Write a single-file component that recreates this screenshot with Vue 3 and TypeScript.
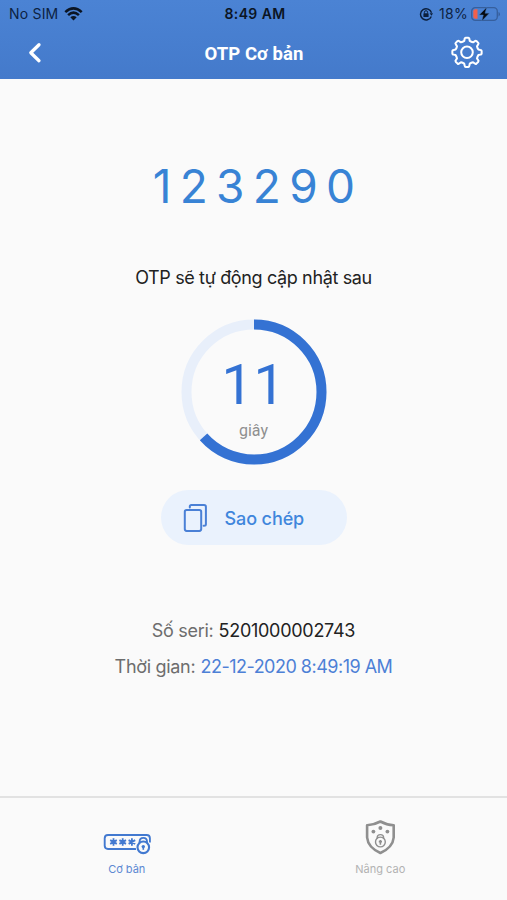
<script setup lang="ts">
import { computed, ref } from 'vue'

const otp = ref('123290')
const remaining = ref(11)
const period = 30
const radius = 67.5
const circumference = 2 * Math.PI * radius
const dash = computed(
  () => `${(circumference * (period - remaining.value)) / period} ${circumference}`,
)

// Outline of an eight-toothed cog centred on the origin.
function cogPath(teeth: number, outer: number, inner: number): string {
  const step = (Math.PI * 2) / teeth
  const at = (r: number, a: number) =>
    `${(r * Math.sin(a)).toFixed(2)} ${(-r * Math.cos(a)).toFixed(2)}`
  let d = ''
  for (let i = 0; i < teeth; i++) {
    const a = i * step
    d += `${i === 0 ? 'M' : 'L'}${at(inner, a - 0.24)}`
    d += `L${at(outer - 1, a - 0.17)}Q${at(outer, a - 0.16)} ${at(outer, a - 0.09)}`
    d += `L${at(outer, a + 0.09)}Q${at(outer, a + 0.16)} ${at(outer - 1, a + 0.17)}`
    d += `L${at(inner, a + 0.24)}Q${at(inner - 0.5, a + step / 2)} ${at(inner, a + step - 0.24)}`
  }
  return d + 'Z'
}
const cog = cogPath(8, 14.7, 11.7)
</script>

<template>
  <div class="screen">
    <header class="top">
      <div class="status">
        <div class="carrier">
          <span class="nosim">No SIM</span>
          <svg width="19" height="14" viewBox="0 0 19 14" fill="none" stroke="#0b1524" stroke-width="2.6">
            <path d="M1.3 5.1Q9.5 -2.3 17.7 5.1" />
            <path d="M4.1 8.1Q9.5 3.3 14.9 8.1" />
            <path d="M6.3 10.2Q9.5 7.6 12.7 10.2L9.5 13.6Z" fill="#0b1524" stroke="none" />
          </svg>
        </div>
        <span class="clock">8:49 AM</span>
        <div class="power">
          <svg class="lock" width="14" height="14" viewBox="0 0 14 14" fill="none" stroke="#0b1f3c">
            <path d="M12.3 9.4A5.6 5.6 0 1 1 12.5 5.8" stroke-width="1.4" />
            <path d="M10.6 6.2H14L12.5 8.8Z" fill="#0b1f3c" stroke="none" />
            <path d="M5.4 6.5V5.3A1.6 1.6 0 0 1 8.6 5.3V6.5" stroke-width="1" />
            <rect x="4.4" y="6.3" width="5.2" height="3.8" rx=".6" fill="#0b1f3c" stroke="none" />
          </svg>
          <span class="percent">18%</span>
          <svg class="battery" width="30" height="16" viewBox="0 0 30 16">
            <rect x=".7" y="1.7" width="25.6" height="12.6" rx="3.6" fill="none" stroke="#365f9d" stroke-width="1.3" />
            <path d="M27.5 6V10.4Q29 9.8 29 8.2T27.5 6Z" fill="#365f9d" />
            <path d="M4.4 3.3H6.5V12.7H4.4Q2.3 12.7 2.3 10.7V5.3Q2.3 3.3 4.4 3.3Z" fill="#f2604b" />
            <path d="M15.7 1.2L8.2 9H12.3L10.8 15L18.3 7.2H14.1Z" fill="#050a12" stroke="#4779bd" stroke-width=".5" />
          </svg>
        </div>
      </div>
      <nav class="bar">
        <svg class="back" width="14" height="22" viewBox="0 0 14 22" fill="none" stroke="#fff" stroke-width="3.3">
          <path d="M11 2.7L2.8 10.7L11 18.7" stroke-linecap="round" stroke-linejoin="round" />
        </svg>
        <h1>OTP Cơ bản</h1>
        <svg class="gear" width="34" height="34" viewBox="-17 -16.3 34 34" fill="none" stroke="#fff" stroke-width="2" stroke-linejoin="round">
          <path :d="cog" />
          <circle r="5.8" />
        </svg>
      </nav>
    </header>

    <main>
      <div class="code">{{ otp }}</div>
      <p class="hint">OTP sẽ tự động cập nhật sau</p>
      <div class="timer">
        <svg class="ring" width="146" height="146" viewBox="-73 -73 146 146" fill="none" stroke-width="10">
          <circle :r="radius" stroke="#e8effa" />
          <circle :r="radius" stroke="#3472d3" :stroke-dasharray="dash" transform="rotate(-90)" />
        </svg>
        <div class="reading">
          <span class="seconds">{{ remaining }}</span>
          <span class="unit">giây</span>
        </div>
      </div>
      <button class="copy" type="button">
        <svg width="24" height="28" viewBox="0 0 24 28" fill="none" stroke="#4a80d6" stroke-width="2" stroke-linejoin="round">
          <rect x="1.8" y="5.9" width="16.4" height="21" rx="1.8" />
          <path d="M6.8 3.6V2.6Q6.8 1.1 8.3 1.1H21Q22.9 1.1 22.9 2.8V20.2Q22.9 21.7 21 21.7H20.6" stroke-linecap="round" />
        </svg>
        <span>Sao chép</span>
      </button>
      <div class="info serial"><span class="key">Số seri:</span> <span class="number">5201000002743</span></div>
      <div class="info time"><span class="key">Thời gian:</span> <span class="date">22-12-2020 8:49:19 AM</span></div>
    </main>

    <footer class="tabs">
      <div class="tab active">
        <svg width="48" height="36" viewBox="0 0 48 36" fill="none" stroke="#4279d0" stroke-width="1.9">
          <path d="M33 30H5Q1.7 30 1.7 26.7V19.3Q1.7 16 5 16H43.6Q46.9 16 46.9 19.3V23.5" />
          <path d="M10.5 19.2V26.8M7.2 21.1L13.8 24.9M13.8 21.1L7.2 24.9M19.7 19.2V26.8M16.4 21.1L23 24.9M23 21.1L16.4 24.9M28.9 19.2V26.8M25.6 21.1L32.2 24.9M32.2 21.1L25.6 24.9" stroke-width="1.8" />
          <circle cx="40.3" cy="28.3" r="7.6" fill="#fafafa" stroke="none" />
          <path d="M36.6 24.5V22.7Q36.6 18.9 40.3 18.9T44 22.7V24.5" stroke="#fafafa" stroke-width="4" />
          <path d="M36.6 24.3V22.7Q36.6 18.9 40.3 18.9T44 22.7V24.3" />
          <circle cx="40.3" cy="28.3" r="5.8" fill="#fafafa" stroke-width="2.1" />
          <circle cx="40.3" cy="27.6" r="1.7" fill="#4279d0" stroke="none" />
          <path d="M40.3 27.6V30.8" stroke-width="1.6" />
        </svg>
        <span>Cơ bản</span>
      </div>
      <div class="tab">
        <svg width="32" height="36" viewBox="0 0 32 36" fill="none" stroke="#8f8f8f" stroke-width="2.6">
          <path d="M16.4 2.5Q22.5 5.9 29.7 6.2V18.5Q28.8 28.5 16.4 34Q4 28.5 3.1 18.5V6.2Q10.2 5.9 16.4 2.5Z" stroke-linejoin="round" />
          <g fill="#8f8f8f" stroke="none">
            <circle cx="16.4" cy="9" r="2" />
            <circle cx="9.4" cy="12.6" r="1.9" />
            <circle cx="23.4" cy="12.6" r="1.9" />
          </g>
          <path d="M13.2 19.8V18.6Q13.2 15.6 16.4 15.6T19.6 18.6V19.8" stroke-width="1.4" />
          <circle cx="16.4" cy="23" r="4.9" stroke-width="1.4" />
          <path d="M16.4 20.9V25.7M14.8 22.6H18" stroke-width="1.6" />
        </svg>
        <span>Nâng cao</span>
      </div>
    </footer>
  </div>
</template>

<style>
body {
  background: #fafafa;
}
</style>

<style scoped>
.screen {
  display: flex;
  flex-direction: column;
  width: 507px;
  height: 900px;
  overflow: hidden;
  background: #fafafa;
  color: #222;
  font-family: Inter, 'Liberation Sans', sans-serif;
}
.top {
  height: 79px;
  flex: none;
  background: linear-gradient(#4b83d4, #447acb);
}
.status {
  display: grid;
  grid-template-columns: 1fr auto 1fr;
  align-items: center;
  height: 27px;
  padding: 0 6px 0 9px;
  color: #0b1524;
  font-size: 14px;
}
.carrier,
.power {
  display: flex;
  align-items: center;
}
.carrier {
  gap: 6px;
}
.nosim {
  color: #0d2242;
  letter-spacing: 0.2px;
}
.clock {
  font-size: 14px;
  font-weight: 600;
  letter-spacing: 0.4px;
}
.power {
  justify-content: flex-end;
}
.lock {
  margin-right: 6px;
}
.percent {
  margin-right: 3px;
  color: #0d2242;
  letter-spacing: 0.3px;
}
.bar {
  display: grid;
  grid-template-columns: 1fr auto 1fr;
  align-items: center;
  height: 51px;
  padding: 0 23px 0 28px;
}
.bar h1 {
  margin: 0 4px 0 0;
  padding-top: 2px;
  color: #fff;
  font-family: Roboto, sans-serif;
  font-size: 18.5px;
  font-weight: 700;
  letter-spacing: 0.05px;
  white-space: nowrap;
}
.gear {
  justify-self: end;
}
main {
  flex: 1;
  display: flex;
  flex-direction: column;
  align-items: center;
}
.code {
  margin-top: 77px;
  padding-left: 9px;
  color: #3883d5;
  font-size: 46px;
  font-weight: 370;
  line-height: 60px;
  letter-spacing: 8.3px;
}
.hint {
  margin: 50px 0 0;
  font-size: 18px;
  line-height: 24px;
  letter-spacing: -0.36px;
  white-space: nowrap;
}
.timer {
  display: grid;
  margin-top: 29px;
}
.ring,
.reading {
  grid-area: 1 / 1;
}
.reading {
  display: flex;
  flex-direction: column;
  align-items: center;
  padding-top: 35px;
  font-family: Roboto, sans-serif;
}
.seconds {
  color: #3472d3;
  font-size: 56px;
  line-height: 62px;
  letter-spacing: 0.5px;
}
.unit {
  margin-top: 5px;
  color: #8f8f8f;
  font-size: 16px;
  line-height: 20px;
}
.copy {
  display: flex;
  align-items: center;
  gap: 18px;
  width: 186px;
  height: 55px;
  margin-top: 25px;
  padding: 0 0 0 22px;
  border: 0;
  border-radius: 28px;
  background: #eaf2fd;
  color: #3f86dc;
  font-family: Inter, sans-serif;
  font-size: 18px;
  font-weight: 500;
  letter-spacing: -0.1px;
}
.copy span {
  padding-top: 2px;
}
.info {
  font-size: 18px;
  line-height: 24px;
  white-space: nowrap;
}
.serial {
  margin-top: 74px;
}
.time {
  margin-top: 12px;
}
.key {
  color: #6d6d6d;
  letter-spacing: -0.3px;
}
.number {
  letter-spacing: -0.28px;
}
.date {
  color: #4d80d6;
  letter-spacing: -0.5px;
}
.tabs {
  display: grid;
  grid-template-columns: 1fr 1fr;
  flex: none;
  height: 102px;
  border-top: 2px solid #e2e2e2;
}
.tab {
  display: flex;
  flex-direction: column;
  align-items: center;
  padding-top: 21px;
  color: #b2b2b2;
  font-size: 11px;
}
.tab span {
  margin-top: 7px;
}
.active {
  color: #5c88d2;
}
</style>
